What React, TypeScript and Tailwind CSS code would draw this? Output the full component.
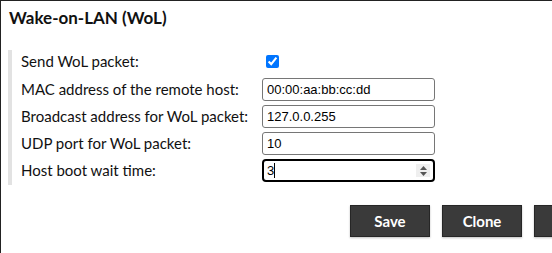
export default function App() {
  const rows = [
    { label: "MAC address of the remote host:", value: "00:00:aa:bb:cc:dd" },
    { label: "Broadcast address for WoL packet:", value: "127.0.0.255" },
    { label: "UDP port for WoL packet:", value: "10" },
  ];

  return (
    <div className="w-[552px] h-[253px] overflow-hidden bg-white border-t border-l border-[#222] font-['Lato',sans-serif] text-[#111]">
      <h1 className="px-2 pt-[7px] text-[17px] leading-[20px] font-bold">Wake-on-LAN (WoL)</h1>

      {/* Settings */}
      <div className="ml-[7px] mt-[22px] border-l-4 border-[#e2e2e2] pl-[9px] pb-[3px] flex flex-col gap-1 text-[15px]">
        <div className="flex items-center h-[22px] mb-[2px]">
          <span className="w-[244px]">Send WoL packet:</span>
          <input type="checkbox" defaultChecked className="w-[13px] h-[13px] m-0 ml-[1px]" />
        </div>
        {rows.map((r) => (
          <div key={r.label} className="flex items-center h-[23px]">
            <span className="w-[241px]">{r.label}</span>
            <input
              type="text"
              defaultValue={r.value}
              className="w-[173px] h-[23px] border border-[#767676] rounded-[3px] px-[4px] text-[13px] font-['Liberation_Sans',Arial,sans-serif] text-black outline-none"
            />
          </div>
        ))}
        <div className="flex items-center h-[23px]">
          <span className="w-[241px]">Host boot wait time:</span>
          <div className="relative w-[173px] h-[23px] border-2 border-black rounded-[4px] pl-[3px] flex items-center text-[13px] font-['Liberation_Sans',Arial,sans-serif] text-black">
            <span>3</span>
            <span className="w-px h-[15px] bg-black" />
            <div className="absolute right-[3px] top-[3px] w-[14px] h-[13px] bg-[#efefef] flex flex-col items-center justify-center gap-[2px]">
              <svg width="7" height="4" viewBox="0 0 7 4"><path d="M0 4 L3.5 0 L7 4 Z" fill="#555" /></svg>
              <svg width="7" height="4" viewBox="0 0 7 4"><path d="M0 0 L3.5 4 L7 0 Z" fill="#555" /></svg>
            </div>
          </div>
        </div>
      </div>

      {/* Actions */}
      <div className="flex gap-3 ml-[349px] mt-[20px] w-[400px]">
        {["Save", "Clone", "Delete"].map((b) => (
          <button
            key={b}
            className="shrink-0 w-[80px] h-[32px] bg-[#3a3a3a] border border-[#262626] text-white text-[15px] font-bold shadow-[0_1px_2px_rgba(0,0,0,0.25)]"
          >
            {b}
          </button>
        ))}
      </div>
    </div>
  );
}
